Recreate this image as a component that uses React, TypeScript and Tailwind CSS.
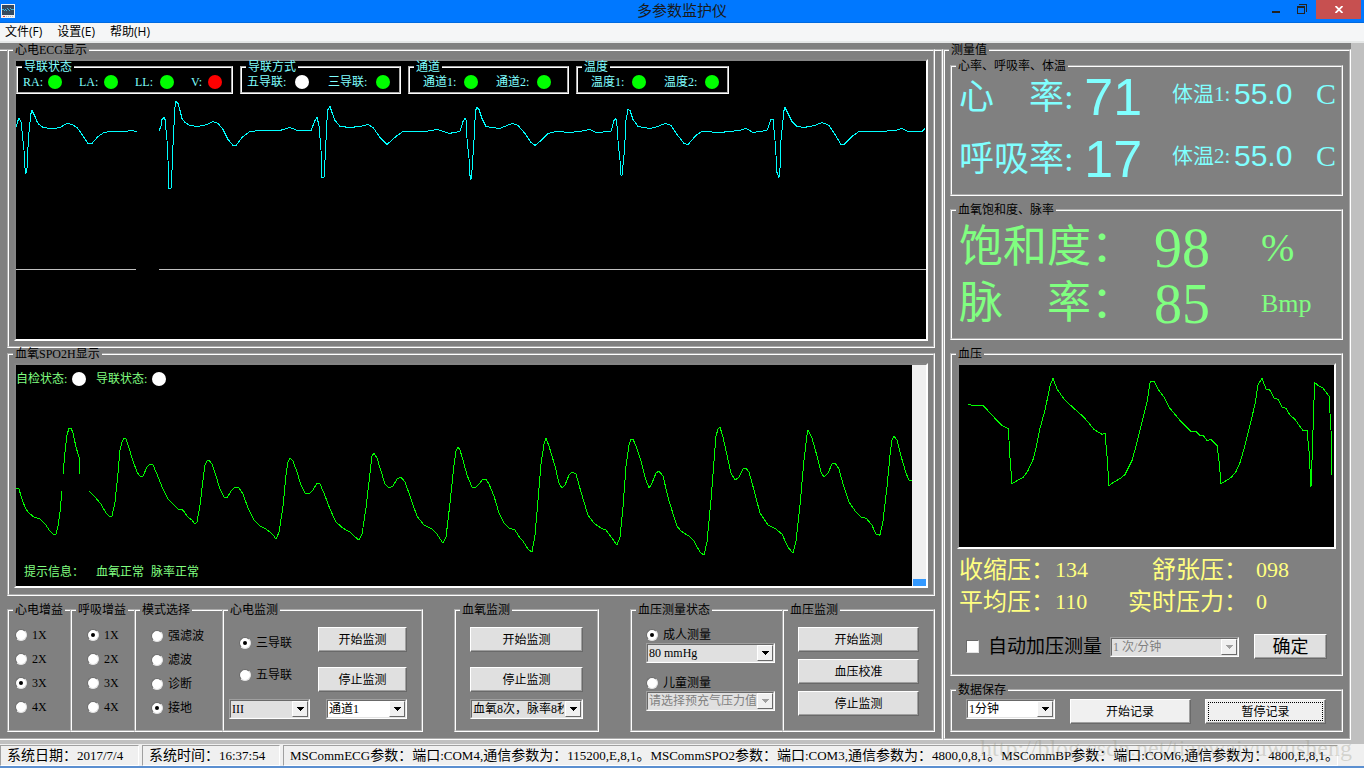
import type { ReactNode } from 'react';
import { clsx } from 'clsx';

const SERIF = "font-['Liberation_Serif','Noto_Sans_CJK_SC',serif]";

const ECG_TRACES = [
  '16,127 18,120 19,118 21,121 23,140 24,150 25,168 26,173 27,168 28,147 29,132 30,122 31,113 32,110 33,112 35,116 37,121 39,124 43,127 50,128 55,128 60,127 67,123 72,124 77,127 82,134 88,143 92,143 98,136 104,132 110,131 125,131 131,130 137,131',
  '159,130 161,126 162,119 164,117 165,119 167,140 168,160 169,188 171,188 172,170 173,145 174,125 175,107 176,101 178,103 180,110 182,118 185,122 190,125 198,126 207,124 213,121 218,123 223,129 228,139 233,145 236,145 242,137 250,131 262,130 280,130 290,127 297,130 311,130 315,120 317,117 319,125 321,150 322,177 324,177 325,160 326,140 327,120 328,109 330,106 332,112 335,120 340,126 350,127 360,126 368,124 373,127 380,137 387,144 396,136 403,131 425,131 437,129 449,133 460,131 463,121 465,118 466,119 467,138 469,158 470,175 471,179 472,170 473,155 474,140 475,120 476,109 477,107 479,109 482,118 486,126 492,127 500,128 507,125 513,123 518,125 525,133 531,142 535,145 540,141 548,133 556,131 570,132 580,131 590,129 596,132 611,131 614,120 616,118 617,125 618,140 620,160 621,175 622,175 624,155 625,140 626,120 628,109 630,110 633,119 638,126 650,128 658,126 665,123 671,125 677,134 684,143 688,144 696,135 702,131 720,132 740,130 746,128 753,132 767,130 771,119 773,119 775,140 776,155 777,172 779,177 780,168 781,140 783,120 784,110 785,107 788,113 792,121 797,126 804,127 815,125 822,122 829,125 835,134 841,144 844,144 852,136 859,131 880,131 895,130 902,128 908,131 922,131 925,128',
];

const RESP_TRACES = ['16,269 136,269', '159,269 926,269'];

const SPO2_TRACES = [
  '16,488 19,489 22,499 25,507 28,512 34,517 40,519 46,525 50,531 54,535 56,534 58,526 60,512 62,491',
  '63,474 65,452 67,435 69,428 71,428 73,433 76,447 79,457 80,474',
  '89,491 95,497 101,504 106,513 110,517 112,516 115,502 118,473 120,450 122,442 124,438 126,439 129,448 133,461 137,472 140,476 143,476 147,467 150,464 153,465 157,474 163,489 168,499 173,504 178,509 183,510 188,517 192,520 195,524 197,522 200,505 203,480 205,465 207,461 209,460 212,464 216,476 220,489 224,497 227,498 231,491 235,487 239,488 243,494 248,508 254,520 260,526 266,529 270,532 274,536 276,539 279,532 283,506 286,475 288,462 290,458 293,461 297,472 301,485 305,493 309,494 313,490 317,483 320,484 324,493 330,509 336,522 343,528 350,532 354,536 359,540 362,534 366,508 370,473 372,456 374,453 377,458 381,471 385,484 389,488 393,486 397,479 401,477 405,482 410,496 417,516 424,525 432,529 437,534 443,543 446,537 450,503 454,465 456,451 458,447 460,450 463,460 467,475 472,487 475,488 479,484 483,479 486,479 489,484 494,496 499,513 504,523 509,528 515,530 520,538 523,541 528,549 532,552 535,535 538,500 541,464 544,444 546,438 549,446 555,466 559,483 562,488 565,485 569,475 572,472 576,474 581,492 588,515 594,523 601,528 606,530 612,538 617,545 620,537 623,507 626,466 629,445 631,439 633,439 636,446 641,461 645,477 649,488 652,483 656,473 659,471 663,476 669,501 677,526 681,531 689,536 694,541 700,552 704,555 707,542 711,500 714,461 716,436 718,429 720,427 723,437 727,455 731,473 735,480 739,477 743,469 746,468 749,472 754,490 760,513 768,525 776,529 782,534 788,547 793,553 796,541 800,505 804,460 807,435 808,430 812,438 817,456 821,472 824,477 828,473 832,464 835,463 839,469 843,484 849,502 856,512 861,517 866,518 872,525 876,534 880,535 883,521 887,487 890,455 892,440 894,436 897,440 901,456 906,473 909,480 912,480',
];

const BP_TRACES = [
  '968,404 972,405 983,405 994,417 1002,425 1008,428 1009,440 1010,457 1012,483 1017,480 1023,477 1028,470 1033,459 1036,448 1040,428 1045,410 1050,386 1053,378 1057,389 1065,400 1076,410 1084,417 1094,429 1102,434 1105,433 1107,455 1109,485 1113,482 1120,478 1125,474 1132,460 1137,442 1142,422 1147,402 1150,383 1151,381 1154,381 1158,389 1164,397 1169,407 1180,420 1191,431 1196,431 1200,435 1203,435 1207,440 1211,439 1217,445 1219,460 1221,483 1226,480 1231,477 1236,471 1240,462 1245,445 1250,425 1255,404 1258,385 1262,378 1266,389 1270,390 1274,398 1278,399 1282,407 1286,408 1290,415 1294,418 1303,430 1307,430 1309,450 1311,486 1312,460 1314,400 1314,382 1319,386 1323,388 1329,396 1331,430 1332,474',
];

function Trace({ lines, color }: { lines: string[]; color: string }) {
  return (
    <>
      {lines.map((points) => (
        <polyline
          key={points}
          points={points}
          fill="none"
          stroke={color}
          strokeWidth="1"
          vectorEffect="non-scaling-stroke"
          shapeRendering="crispEdges"
        />
      ))}
    </>
  );
}

function Plot({ viewBox, children }: { viewBox: string; children: ReactNode }) {
  return (
    <svg className="absolute inset-0 h-full w-full" viewBox={viewBox} preserveAspectRatio="none" aria-hidden="true">
      {children}
    </svg>
  );
}

function Screen({ className, children }: { className?: string; children: ReactNode }) {
  return (
    <div
      className={clsx(
        'relative min-h-0 border-2 border-t-[#848484] border-r-white border-b-white border-l-[#848484] bg-black',
        className,
      )}
    >
      {children}
    </div>
  );
}

type GroupProps = {
  title: string;
  className?: string;
  legendClass?: string;
  bodyClass?: string;
  children: ReactNode;
};

function Group({ title, className, legendClass, bodyClass, children }: GroupProps) {
  return (
    <fieldset
      className={clsx('flex min-h-0 min-w-0 border-2 border-white px-[5px] [border-style:groove]!', className)}
    >
      <legend className={clsx('-ml-px px-0.5 leading-3 whitespace-nowrap', legendClass)}>{title}</legend>
      <div className={clsx('flex min-h-0 min-w-0 flex-1', bodyClass)}>{children}</div>
    </fieldset>
  );
}

function Lamp({ label, color, className }: { label: string; color: string; className?: string }) {
  return (
    <span className={clsx('flex items-center justify-between leading-4 whitespace-nowrap', className)}>
      {label}
      <i className={clsx('size-3.5 shrink-0 rounded-full', color)} />
    </span>
  );
}

function Radio({ name, label, checked }: { name: string; label: string; checked?: boolean }) {
  return (
    <label className="flex h-4 items-center gap-[5px] whitespace-nowrap">
      <input
        type="radio"
        name={name}
        defaultChecked={checked}
        className="grid size-3 shrink-0 appearance-none place-content-center rounded-full border border-t-[#696969] border-r-[#e3e3e3] border-b-[#e3e3e3] border-l-[#696969] bg-white before:size-1 before:rounded-full checked:before:bg-black"
      />
      {label}
    </label>
  );
}

function Button({ children, className }: { children: ReactNode; className?: string }) {
  return (
    <button
      type="button"
      className={clsx(
        'h-[25px] border border-t-white border-r-[#696969] border-b-[#696969] border-l-white bg-[#e0e0e0] shadow-[inset_-1px_-1px_0_#a0a0a0]',
        className,
      )}
    >
      {children}
    </button>
  );
}

type SelectProps = { label: string; options: string[]; className?: string; white?: boolean; disabled?: boolean };

function Select({ label, options, className, white, disabled }: SelectProps) {
  return (
    <span
      className={clsx(
        'relative flex h-5 border border-t-[#a0a0a0] border-r-white border-b-white border-l-[#a0a0a0]',
        className,
      )}
    >
      <select
        aria-label={label}
        disabled={disabled}
        className={clsx(
          'w-full appearance-none overflow-hidden border border-t-[#696969] border-r-[#e3e3e3] border-b-[#e3e3e3] border-l-[#696969] pr-[17px] pl-px leading-4 disabled:text-[#808080] disabled:opacity-100',
          white ? 'bg-white' : 'bg-[#e0e0e0]',
        )}
      >
        {options.map((o) => (
          <option key={o}>{o}</option>
        ))}
      </select>
      <span className="pointer-events-none absolute inset-y-px right-px grid w-4 place-items-center border border-t-white border-r-[#696969] border-b-[#696969] border-l-white bg-[#f0f0f0]">
        <svg width="7" height="4" viewBox="0 0 7 4" shapeRendering="crispEdges" aria-hidden="true">
          <path d="M0 0h7v1H6v1H5v1H4v1H3V3H2V2H1V1H0z" fill={disabled ? '#a0a0a0' : '#000'} />
        </svg>
      </span>
    </span>
  );
}

function TitleBar() {
  return (
    <header className="grid h-[23px] shrink-0 grid-cols-[1fr_auto_1fr] items-start border-b border-[#006ae0] bg-[#0078ff] text-[#1a1a1a]">
      <svg className="mt-1 ml-px" width="14" height="14" viewBox="0 0 14 14" shapeRendering="crispEdges" aria-hidden="true">
        <rect width="14" height="14" fill="#f0f0f0" />
        <rect x="1" y="1" width="12" height="10" fill="#34495e" />
        <path
          d="M1 5h2v1H1zM3 6h1v1H3zM4 5h1v1H4zM5 6h1v1H5zM6 4h1v1H6zM7 5h1v1H7zM8 6h1v1H8zM9 4h1v1H9zM10 5h3v1h-3z"
          fill="#3fb0d8"
        />
        <rect x="2" y="12" width="2" height="1" fill="#e04040" />
        <path d="M5 12h1v1H5zM7 12h1v1H7zM9 12h1v1H9zM11 12h1v1h-1z" fill="#bbb" />
      </svg>
      <h1 className="text-[15px] leading-[22px]">多参数监护仪</h1>
      <div className="flex justify-end pr-[3px]">
        <button type="button" aria-label="最小化" className="grid h-5 w-6 place-items-center">
          <svg width="8" height="10" shapeRendering="crispEdges">
            <rect y="6" width="8" height="2" fill="#222" />
          </svg>
        </button>
        <button type="button" aria-label="还原" className="grid h-[18px] w-7 place-items-center">
          <svg width="10" height="10" shapeRendering="crispEdges" fill="none" stroke="#222">
            <path d="M2 .5h7.500V8" />
            <rect x=".5" y="2.500" width="7" height="7" />
            <path d="M0 3.500h8" />
          </svg>
        </button>
        <button type="button" aria-label="关闭" className="grid h-[19px] w-[45px] place-items-center bg-[#c75050]">
          <svg width="8" height="7" stroke="#fff" strokeWidth="1.800">
            <path d="M.5 0l7 7M7.500 0l-7 7" />
          </svg>
        </button>
      </div>
    </header>
  );
}

function MenuBar() {
  return (
    <nav className="flex h-5 shrink-0 items-center gap-[15px] border-b-2 border-[#e6e8e8] bg-[#f5f6f7] pl-[5px] font-['Open_Sans','Noto_Sans_CJK_SC',sans-serif] text-xs leading-[18px]">
      <a href="#file">文件(F)</a>
      <a href="#settings">设置(E)</a>
      <a href="#help">帮助(H)</a>
    </nav>
  );
}

function EcgPanel() {
  const group = 'h-[33px] text-[#80ffff]';
  return (
    <Group title="心电ECG显示" className="flex-[307_1_0] pb-[5px]" legendClass="bg-[#808080]">
      <Screen className="mt-[3px] flex-1">
        <Plot viewBox="16 60.5 910 278">
          <Trace lines={ECG_TRACES} color="#00ffff" />
          <Trace lines={RESP_TRACES} color="#c0c0c0" />
        </Plot>
        <div className="relative flex gap-[7px]">
          <Group title="导联状态" className={clsx(group, 'w-[217px]')} bodyClass="items-start justify-between pt-px pr-1">
            <Lamp label="RA:" color="bg-[#00ff00]" className="w-[39px]" />
            <Lamp label="LA:" color="bg-[#00ff00]" className="w-[39px]" />
            <Lamp label="LL:" color="bg-[#00ff00]" className="w-[39px]" />
            <Lamp label="V:" color="bg-[#ff0000]" className="w-[31px]" />
          </Group>
          <Group title="导联方式" className={clsx(group, 'w-[161px]')} bodyClass="items-start justify-between pt-px pr-1">
            <Lamp label="五导联:" color="bg-white" className="w-[62px]" />
            <Lamp label="三导联:" color="bg-[#00ff00]" className="w-[62px]" />
          </Group>
          <Group title="通道" className={clsx(group, 'w-[161px]')} bodyClass="items-start gap-[18px] pt-px pl-2">
            <Lamp label="通道1:" color="bg-[#00ff00]" className="w-[55px]" />
            <Lamp label="通道2:" color="bg-[#00ff00]" className="w-[55px]" />
          </Group>
          <Group title="温度" className={clsx(group, 'w-[153px]')} bodyClass="items-start gap-[18px] pt-px pl-2">
            <Lamp label="温度1:" color="bg-[#00ff00]" className="w-[55px]" />
            <Lamp label="温度2:" color="bg-[#00ff00]" className="w-[55px]" />
          </Group>
        </div>
      </Screen>
    </Group>
  );
}

function Spo2Panel() {
  return (
    <Group title="血氧SPO2H显示" className="flex-[248_1_0] pb-[6px]">
      <Screen className="mt-[3px] flex flex-1 text-[#80ff80]">
        <div className="relative flex flex-1 flex-col justify-between py-1.5">
          <Plot viewBox="16 365 896 221">
            <Trace lines={SPO2_TRACES} color="#00ff00" />
          </Plot>
          <div className="relative flex gap-[10px]">
            <Lamp label="自检状态:" color="bg-white" className="w-[70px]" />
            <Lamp label="导联状态:" color="bg-white" className="w-[70px]" />
          </div>
          <p className="relative pl-2 leading-4">
            提示信息：<span className="ml-3">血氧正常</span> <span className="ml-1">脉率正常</span>
          </p>
        </div>
        <div role="progressbar" aria-label="脉搏强度" className="flex w-[14px] flex-col justify-end bg-[#f0f0f0] pl-px">
          <div className="h-[7px] bg-[#3399ff]" />
        </div>
      </Screen>
    </Group>
  );
}

type GainGroupProps = { title: string; name: string; value: string; className: string; bodyClass: string };

function GainGroup({ title, name, value, className, bodyClass }: GainGroupProps) {
  return (
    <Group title={title} className={className} bodyClass={clsx('flex-col gap-2 pt-[11px]', bodyClass)}>
      {['1X', '2X', '3X', '4X'].map((g) => (
        <Radio key={g} name={name} label={g} checked={g === value} />
      ))}
    </Group>
  );
}

function ControlRow() {
  return (
    <div className="mt-2 flex h-32 shrink-0 justify-between">
      <div className="flex">
        <GainGroup title="心电增益" name="ecg-gain" value="3X" className="w-[65px]" bodyClass="pl-px" />
        <GainGroup title="呼吸增益" name="resp-gain" value="1X" className="-ml-0.5 w-[66px]" bodyClass="pl-[10px]" />
        <Group title="模式选择" className="-ml-0.5 w-[90px]" bodyClass="flex-col gap-2 pt-3 pl-[10px]">
          <Radio name="mode" label="强滤波" />
          <Radio name="mode" label="滤波" />
          <Radio name="mode" label="诊断" />
          <Radio name="mode" label="接地" checked />
        </Group>
        <Group title="心电监测" className="-ml-0.5 w-[201px]" bodyClass="justify-between pt-[11px] pr-[9px]">
          <div className="flex flex-col">
            <div className="flex flex-col gap-4 pt-2 pl-[10px]">
              <Radio name="lead" label="三导联" checked />
              <Radio name="lead" label="五导联" />
            </div>
            <Select label="导联" options={['III', 'II', 'I']} className="mt-4 w-[81px]" />
          </div>
          <div className="flex flex-col">
            <Button className="w-[89px]">开始监测</Button>
            <Button className="mt-[15px] w-[89px]">停止监测</Button>
            <Select label="通道" options={['通道1', '通道2']} white className="mt-[7px] ml-2 w-[81px]" />
          </div>
        </Group>
      </div>

      <Group title="血氧监测" className="w-[145px]" bodyClass="flex-col px-[9px] pt-[11px]">
        <Button>开始监测</Button>
        <Button className="mt-[15px]">停止监测</Button>
        <Select label="平均次数" options={['血氧8次，脉率8秒']} className="mt-[7px]" />
      </Group>

      <div className="flex">
        <Group title="血压测量状态" className="w-[154px]" bodyClass="flex-col pt-[11px] pr-0.5 pl-[9px]">
          <Radio name="patient" label="成人测量" checked />
          <Select label="成人预充气压力" options={['80 mmHg']} />
          <div className="mt-3">
            <Radio name="patient" label="儿童测量" />
          </div>
          <Select label="儿童预充气压力" options={['请选择预充气压力值']} disabled />
        </Group>
        <Group title="血压监测" className="-ml-0.5 w-[153px]" bodyClass="flex-col gap-[7px] px-[9px] pt-[11px]">
          <Button>开始监测</Button>
          <Button>血压校准</Button>
          <Button>停止监测</Button>
        </Group>
      </div>
    </div>
  );
}

function VitalRow({ label, value, tempLabel, temp }: { label: string; value: string; tempLabel: string; temp: string }) {
  return (
    <div className="flex h-[62px] items-center whitespace-nowrap">
      <span className="w-[127px] text-[35px]">{label}</span>
      <span className="w-[89px] font-['Liberation_Sans',sans-serif] text-[52px]">{value}</span>
      <div className="flex items-center pb-1.5">
        <span className="w-[62px] text-[21px]">{tempLabel}</span>
        <span className="w-[82px] font-['Liberation_Sans',sans-serif] text-[30px]">{temp}</span>
        <span className="text-[30px]">C</span>
      </div>
    </div>
  );
}

function Measurements() {
  return (
    <Group
      title="测量值"
      className="w-[408px] shrink-0"
      legendClass="bg-[#808080]"
      bodyClass="flex-col gap-2 pt-1 pr-px pb-[6px]"
    >
      <Group
        title="心率、呼吸率、体温"
        className="h-[136px] shrink-0 leading-none text-[#80ffff]"
        legendClass="text-black"
        bodyClass="-mt-1.5 flex-col pl-0.5"
      >
        <VitalRow label="心　率:" value="71" tempLabel="体温1:" temp="55.0" />
        <VitalRow label="呼吸率:" value="17" tempLabel="体温2:" temp="55.0" />
      </Group>

      <Group
        title="血氧饱和度、脉率"
        className="h-[136px] shrink-0 leading-none text-[#80ff80]"
        legendClass="text-black"
        bodyClass="flex-col pt-1 pl-0.5"
      >
        <div className="flex h-14 items-center whitespace-nowrap">
          <span className="w-[195px] text-[44px]">饱和度：</span>
          <span className="w-[107px] text-[56px]">98</span>
          <span className="text-[40px]">%</span>
        </div>
        <div className="flex h-14 items-center whitespace-nowrap">
          <span className="w-[195px] text-[44px]">脉　率：</span>
          <span className="w-[107px] text-[56px]">85</span>
          <span className="text-[26px]">Bmp</span>
        </div>
      </Group>

      <Group title="血压" className="flex-1" bodyClass="flex-col pb-[15px]">
        <Screen className="mt-[3px] flex-1">
          <Plot viewBox="959 365 375 181">
            <Trace lines={BP_TRACES} color="#00ff00" />
          </Plot>
        </Screen>
        <div className="grid grid-cols-[96px_64px_1fr_88px] pt-[5px] pl-0.5 text-[22px] leading-8 whitespace-nowrap text-[#ffff80]">
          <span className="text-2xl/8">收缩压：</span>
          <span>134</span>
          <span className="text-right text-2xl/8">舒张压：</span>
          <span className="pl-2">098</span>
          <span className="text-2xl/8">平均压：</span>
          <span>110</span>
          <span className="text-right text-2xl/8">实时压力：</span>
          <span className="pl-2">0</span>
        </div>
        <div className="mt-4 flex items-center px-[9px]">
          <label className="flex items-center gap-[9px] text-[19px] leading-6 whitespace-nowrap">
            <input
              type="checkbox"
              className="size-[13px] appearance-none border border-t-[#696969] border-r-[#e3e3e3] border-b-[#e3e3e3] border-l-[#696969] bg-white checked:bg-black"
            />
            自动加压测量
          </label>
          <Select label="测量频率" options={['1  次/分钟']} disabled className="ml-2 w-[129px]" />
          <Button className="ml-auto w-[73px] text-lg leading-5">确定</Button>
        </div>
      </Group>

      <Group
        title="数据保存"
        className="h-12 shrink-0"
        bodyClass="items-start justify-between pt-[3px] pr-[10px] pl-[9px]"
      >
        <Select label="保存间隔" options={['1分钟']} white className="w-[89px]" />
        <Button className="w-[121px] bg-[#f0f0f0]">开始记录</Button>
        <Button className="w-[121px] bg-[#f0f0f0] outline-1 -outline-offset-4 outline-black outline-dotted">暂停记录</Button>
      </Group>
    </Group>
  );
}

// Latin runs are set one step smaller so they keep the half-width rhythm beside CJK
function StatusText({ text }: { text: string }) {
  return (
    <>
      {text.split(/([\x20-\x7e]+)/).map((run, i) =>
        i % 2 ? (
          <span key={i} className="text-[13px]">
            {run}
          </span>
        ) : (
          run
        ),
      )}
    </>
  );
}

function StatusBar() {
  const cell = 'border border-t-[#a0a0a0] border-r-white border-b-white border-l-[#a0a0a0] pl-1.5';
  return (
    <footer className="relative flex h-6 shrink-0 gap-[3px] overflow-hidden border-b-2 border-[#5b8fd0] bg-[#f0f0f0] pt-px text-sm leading-5 whitespace-nowrap">
      <div className={clsx(cell, 'w-[139px] shrink-0')}>
        <StatusText text="系统日期：2017/7/4" />
      </div>
      <div className={clsx(cell, 'w-[138px] shrink-0')}>
        <StatusText text="系统时间：16:37:54" />
      </div>
      <div className={clsx(cell, 'mr-[26px] min-w-0 flex-1')}>
        <StatusText text="MSCommECG参数：端口:COM4,通信参数为：115200,E,8,1。MSCommSPO2参数：端口:COM3,通信参数为：4800,0,8,1。MSCommBP参数：端口:COM6,通信参数为：4800,E,8,1。" />
      </div>
    </footer>
  );
}

export default function App() {
  return (
    <div className={clsx('relative flex h-screen min-h-[720px] min-w-[1280px] flex-col overflow-hidden bg-[#c0c0c0] text-xs text-black', SERIF)}>
      <TitleBar />
      <MenuBar />
      <main className="flex min-h-0 flex-1 pr-[13px] pb-1">
        <div className="flex min-w-0 flex-1 flex-col bg-[#808080] pt-1.5">
          <div className="flex min-h-0 flex-1 flex-col border-2 border-l-0 border-white pr-[6px] pb-[6px] pl-[7px] [border-style:groove]!">
            <div className="-mt-[7px] flex min-h-0 flex-1 flex-col">
              <EcgPanel />
              <Spo2Panel />
            </div>
            <ControlRow />
          </div>
        </div>
        <div className="flex bg-[#808080] pt-px">
          <Measurements />
        </div>
      </main>
      <StatusBar />
      <p className="pointer-events-none absolute right-3 bottom-2 text-2xl/6 text-[#8c8c78]/30">
        http://blog.csdn.net/tianwaiyuwusheng
      </p>
    </div>
  );
}
